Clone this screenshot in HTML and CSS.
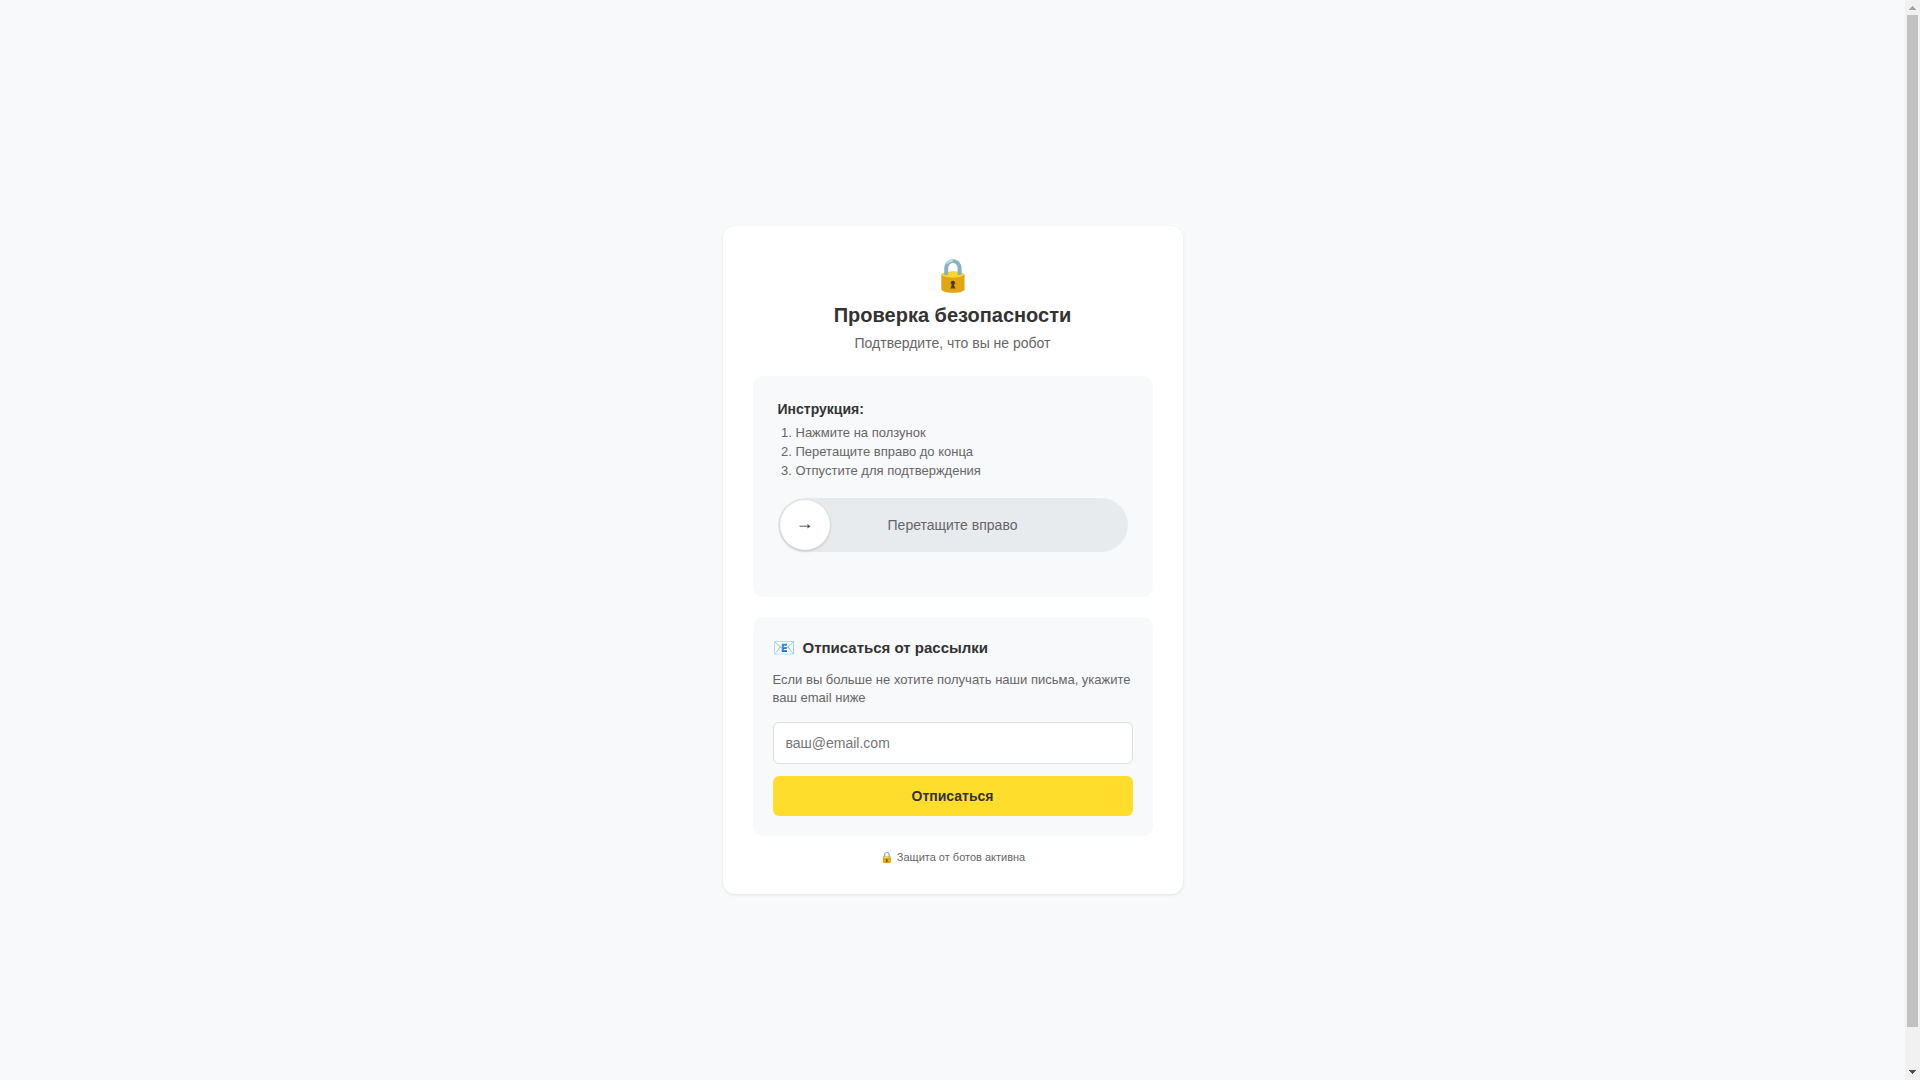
FILE: index.html
```html
<!DOCTYPE html>
<html lang="ru">
<head>
    <meta charset="UTF-8">
    <meta name="viewport" content="width=device-width, initial-scale=1.0">
    <title>Проверка безопасности</title>
    <link rel="stylesheet" href="styles.css">
</head>
<body>
    <div class="page">
        <main class="container">
            <header class="header">
                <div class="logo">🔒</div>
                <h1 class="title">Проверка безопасности</h1>
                <p class="subtitle">Подтвердите, что вы не робот</p>
            </header>

            <section class="captcha">
                <h2 class="instructions-title">Инструкция:</h2>
                <ol class="instructions">
                    <li>Нажмите на ползунок</li>
                    <li>Перетащите вправо до конца</li>
                    <li>Отпустите для подтверждения</li>
                </ol>
                <div class="slider">
                    <button type="button" class="slider-handle" aria-label="Перетащите вправо">→</button>
                    <span class="slider-text">Перетащите вправо</span>
                </div>
                <div class="status" role="status"></div>
            </section>

            <section class="unsubscribe">
                <h2 class="unsubscribe-title"><span class="mail-icon">📧</span>Отписаться от рассылки</h2>
                <p class="unsubscribe-text">Если вы больше не хотите получать наши письма, укажите ваш email ниже</p>
                <form class="unsubscribe-form">
                    <input type="email" class="email-input" placeholder="ваш@email.com" aria-label="Email">
                    <button type="submit" class="unsubscribe-button">Отписаться</button>
                </form>
            </section>

            <footer class="footer">🔒 Защита от ботов активна</footer>
        </main>
    </div>
    <div class="scrollbar" aria-hidden="true">
        <svg class="scroll-arrow" viewBox="0 0 15 15" shape-rendering="crispEdges"><path fill="#a3a3a3" d="M7 6h1v1h1v1h1v1h1v1H4V9h1V8h1V7h1z"/></svg>
        <div class="scroll-track"><div class="scroll-thumb"></div></div>
        <svg class="scroll-arrow" viewBox="0 0 15 15" shape-rendering="crispEdges"><path fill="#505050" d="M4 5h7v1h-1v1H9v1H8v1H7V8H6V7H5V6H4z"/></svg>
    </div>
</body>
</html>
```
FILE: styles.css
```css
* {
    margin: 0;
    padding: 0;
}
body {
    font-family: "Liberation Sans", Arial, sans-serif;
    background-color: #f8f9fb;
    color: #333;
    display: flex;
    height: 100vh;
}
.page {
    flex: 1;
    display: grid;
    grid-template-rows: minmax(100vh, auto);
    justify-items: center;
    align-items: center;
    padding: 20px;
    overflow-y: auto;
    scrollbar-width: none;
}
.container {
    width: 100%;
    max-width: 400px;
    background-color: white;
    border-radius: 12px;
    padding: 30px;
    box-shadow: 0 1px 3px rgba(0, 0, 0, 0.1);
}
.header {
    text-align: center;
    margin-bottom: 25px;
}
.logo {
    font-size: 32px;
    line-height: 38px;
    margin-bottom: 10px;
}
.title {
    font-size: 20px;
    line-height: 23px;
    margin-bottom: 8px;
}
.subtitle {
    font-size: 14px;
    line-height: 16px;
    color: #666;
}

/* Slider check */
.captcha {
    background-color: #f8f9fb;
    border-radius: 10px;
    padding: 25px;
    margin-bottom: 20px;
}
.instructions-title {
    font-size: 14px;
    line-height: 16px;
    margin-bottom: 6px;
}
.instructions {
    font-size: 13px;
    line-height: 19px;
    color: #666;
    padding-left: 18px;
    margin-bottom: 18px;
}
.slider {
    position: relative;
    display: flex;
    justify-content: center;
    align-items: center;
    height: 54px;
    background-color: #e8ebee;
    border-radius: 27px;
}
.slider-text {
    font-size: 14px;
    color: #666;
}
.slider-handle {
    position: absolute;
    top: 2px;
    left: 2px;
    width: 50px;
    height: 50px;
    border: none;
    border-radius: 50%;
    padding-bottom: 4px;
    background-color: white;
    color: #333;
    font-family: inherit;
    font-size: 18px;
    box-shadow: 0 1px 3px rgba(0, 0, 0, 0.2);
    cursor: grab;
}
.status {
    min-height: 20px;
}

/* Unsubscribe form */
.unsubscribe {
    background-color: #f8f9fb;
    border-radius: 10px;
    padding: 20px;
    margin-bottom: 15px;
}
.unsubscribe-title {
    display: flex;
    align-items: center;
    gap: 8px;
    font-size: 15px;
    line-height: 22px;
    margin-bottom: 12px;
}
.mail-icon {
    font-size: 18px;
    font-weight: normal;
}
.unsubscribe-text {
    font-size: 13px;
    line-height: 18px;
    color: #666;
    margin-bottom: 15px;
}
.unsubscribe-form {
    display: flex;
    flex-direction: column;
    gap: 12px;
}
.email-input {
    font-family: inherit;
    font-size: 14px;
    line-height: 16px;
    padding: 12px;
    border: 1px solid #ddd;
    border-radius: 6px;
}
.unsubscribe-button {
    font-family: inherit;
    font-size: 14px;
    font-weight: bold;
    line-height: 16px;
    padding: 12px;
    border: none;
    border-radius: 6px;
    background-color: #ffdd2d;
    color: #333;
    cursor: pointer;
}
.unsubscribe-button:hover {
    background-color: #ffd500;
}
.footer {
    font-size: 11px;
    line-height: 13px;
    text-align: center;
    color: #666;
}

/* Scrollbar */
.scrollbar {
    display: flex;
    flex-direction: column;
    width: 15px;
    background-color: #f1f1f1;
}
.scroll-arrow {
    width: 15px;
    height: 15px;
}
.scroll-track {
    flex: 1;
    padding: 0 2px;
}
.scroll-thumb {
    height: 96.4%;
    background-color: #c1c1c1;
}
```
